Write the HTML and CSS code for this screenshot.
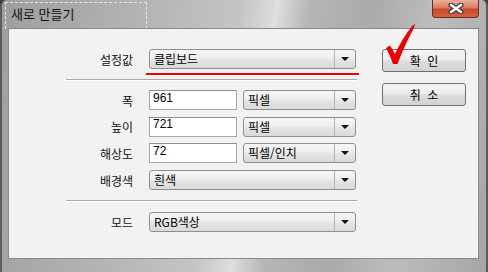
FILE: index.html
```html
<!DOCTYPE html>
<html lang="ko">
<head>
  <meta charset="UTF-8">
  <title>새로 만들기</title>
  <link rel="stylesheet" href="styles.css">
</head>
<body>

<div class="window">
  <div class="titlebar">
    <div class="title">새로 만들기</div>
    <div class="close">
      <svg width="16" height="11" viewBox="0 0 16 11">
        <path d="M3 2 L13 9 M13 2 L3 9" stroke="#3a3a4a" stroke-width="5" stroke-linecap="round"/>
        <path d="M3 2 L13 9 M13 2 L3 9" stroke="#fff" stroke-width="2.6" stroke-linecap="round"/>
      </svg>
    </div>
  </div>

  <div class="client">
    <div class="form">
      <div class="row">
        <span class="label">설정값</span>
        <div class="combo"><span>클립보드</span><i class="arrow"></i></div>
      </div>
      <div class="mark-line"></div>

      <div class="sep first"></div>

      <div class="rows">
        <div class="row">
          <span class="label">폭</span>
          <div class="pair">
            <input class="field" type="text" value="961">
            <div class="combo"><span>픽셀</span><i class="arrow"></i></div>
          </div>
        </div>
        <div class="row">
          <span class="label">높이</span>
          <div class="pair">
            <input class="field" type="text" value="721">
            <div class="combo"><span>픽셀</span><i class="arrow"></i></div>
          </div>
        </div>
        <div class="row">
          <span class="label">해상도</span>
          <div class="pair">
            <input class="field" type="text" value="72">
            <div class="combo"><span>픽셀/인치</span><i class="arrow"></i></div>
          </div>
        </div>
        <div class="row">
          <span class="label">배경색</span>
          <div class="combo"><span>흰색</span><i class="arrow"></i></div>
        </div>
      </div>

      <div class="sep second"></div>

      <div class="row">
        <span class="label">모드</span>
        <div class="combo"><span>RGB색상</span><i class="arrow"></i></div>
      </div>
    </div>

    <div class="buttons">
      <button class="btn">확 인</button>
      <button class="btn">취 소</button>
    </div>
  </div>

  <!-- red check drawn over the OK button -->
  <svg class="check" width="40" height="44" viewBox="0 0 40 44">
    <path d="M6 26 L10 23.5 L15 32 Q22 17 32 4 L35 2 L34 6 Q25 22 17.5 42 L13 42 Q10 33 6 26 Z" fill="#ee0000"/>
  </svg>
</div>

</body>
</html>
```

FILE: styles.css
```css
body {
  margin: 0;
  background: #3c3c3c;
  font-family: "Noto Sans CJK KR", "Liberation Sans", sans-serif;
  font-size: 12px;
  color: #111;
}

.window {
  position: relative;
  width: 488px;
  height: 272px;
  box-sizing: border-box;
  border-left: 2px solid #5c5c5c;
  border-right: 2px solid #5c5c5c;
  border-radius: 6px 6px 0 0;
  background:
    linear-gradient(100deg, #9e9e9e 0%, #b2b2b2 25%, #c4c4c4 45%, #dedede 52%, #b6b6b6 58%, #aaaaaa 70%, #bdbdbd 82%, #a6a6a6 100%);
  display: flex;
  flex-direction: column;
}

.titlebar {
  height: 28px;
  display: flex;
  justify-content: space-between;
  align-items: flex-start;
}

.title {
  margin: 2px 0 0 3px;
  width: 135px;
  height: 26px;
  padding-left: 5px;
  border: 1px dashed #e6e6e6;
  border-bottom: none;
  font-size: 13px;
  line-height: 22px;
  color: #111;
}

.close {
  margin-right: 7px;
  width: 47px;
  height: 18px;
  box-sizing: border-box;
  border: 1px solid #6b2b1e;
  border-top: none;
  border-radius: 0 0 4px 4px;
  background: linear-gradient(#eab0a0 0%, #dc7a5e 45%, #c9482a 55%, #d8603c 100%);
  display: flex;
  align-items: center;
  justify-content: center;
}

.client {
  margin: 0 7px 0 6px;
  height: 231px;
  box-sizing: border-box;
  border: 1px solid #8a8a8a;
  background: #f2f2f2;
  display: flex;
  padding: 20px 0 0 57px;
}

.form {
  width: 291px;
}

.row {
  display: grid;
  grid-template-columns: 67px 207px;
  column-gap: 16px;
  align-items: center;
  height: 20px;
}

.label {
  text-align: right;
  white-space: nowrap;
}

.rows {
  display: flex;
  flex-direction: column;
  gap: 6.7px;
  margin-top: 9px;
}

.pair {
  display: flex;
  gap: 6px;
  height: 20px;
}

.field {
  width: 88px;
  height: 20px;
  box-sizing: border-box;
  margin: 0;
  border: 1px solid #a3a6ae;
  border-top-color: #8e9198;
  background: #fff;
  padding: 0 3px 5px;
  font-family: "Liberation Sans", sans-serif;
  font-size: 12px;
  color: #000;
  outline: none;
}

.combo {
  flex: 1;
  height: 20px;
  box-sizing: border-box;
  border: 1px solid #8e8f8f;
  border-radius: 3px;
  background: linear-gradient(#f6f6f6 0%, #eeeeee 45%, #e4e4e4 55%, #dadada 100%);
  display: flex;
  align-items: center;
  justify-content: space-between;
  padding-left: 4px;
  color: #000;
  line-height: 18px;
}

.arrow {
  width: 21px;
  height: 100%;
  box-sizing: border-box;
  border-left: 1px solid #b4b4b4;
  display: flex;
  align-items: center;
  justify-content: center;
}

.arrow::before {
  content: "";
  border-left: 4px solid transparent;
  border-right: 4px solid transparent;
  border-top: 4px solid #111;
}

.mark-line {
  margin: 4px 0 0 80px;
  width: 213px;
  height: 2px;
  background: #ee0000;
}

.sep {
  border-top: 1px solid #a8a8a8;
  border-bottom: 1px solid #ffffff;
}

.sep.first {
  margin-top: 4px;
}

.sep.second {
  margin-top: 10px;
  margin-bottom: 10px;
}

.buttons {
  margin-left: 25px;
  width: 84px;
  display: flex;
  flex-direction: column;
  gap: 11px;
}

.btn {
  height: 23px;
  margin: 0;
  border: 1px solid #707070;
  border-radius: 3px;
  background: linear-gradient(#f4f4f4 0%, #ececec 48%, #dedede 52%, #d2d2d2 100%);
  font-family: "Noto Sans CJK KR", sans-serif;
  font-size: 12px;
  word-spacing: 3px;
  color: #000;
  padding: 0;
}

.check {
  position: absolute;
  left: 378px;
  top: 22px;
}
```
